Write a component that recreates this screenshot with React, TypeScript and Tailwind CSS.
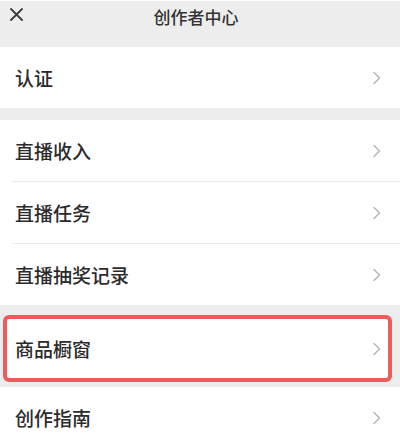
import React from "react";

const Chevron = () => (
  <svg width="10" height="14" viewBox="0 0 10 14" fill="none" className="shrink-0">
    <path d="M2 1.5 L7.5 7 L2 12.5" stroke="#b9b9b9" strokeWidth="1.6" strokeLinecap="round" strokeLinejoin="round" />
  </svg>
);

const Row = ({ label, divider }: { label: string; divider?: boolean }) => (
  <div className="bg-white">
    <div className="h-[61px] flex items-center justify-between pl-[15px] pr-[18px]">
      <span className="text-[19px] font-medium text-[#2b2b2b] leading-none">{label}</span>
      <Chevron />
    </div>
    {divider && <div className="ml-[12px] h-px bg-[#ebebeb]" />}
  </div>
);

export default function App() {
  return (
    <div
      className="w-[400px] h-[444px] overflow-hidden bg-[#ededed]"
      style={{ fontFamily: '"Noto Sans CJK SC", "Noto Sans", sans-serif' }}
    >
      <div className="h-px bg-white" />
      <div className="h-[46px] relative">
        <div className="h-[31px] flex items-center justify-center pr-[8px]">
          <span className="text-[17px] font-medium text-[#333] leading-none">创作者中心</span>
        </div>
        <svg className="absolute left-[9px] top-[6px]" width="15" height="15" viewBox="0 0 15 15">
          <path d="M2 2 L13 13 M13 2 L2 13" stroke="#3a3a3a" strokeWidth="1.8" strokeLinecap="round" />
        </svg>
      </div>
      <Row label="认证" />
      <div className="h-[12px]" />
      <Row label="直播收入" divider />
      <Row label="直播任务" divider />
      <Row label="直播抽奖记录" />
      <div className="h-[10px]" />
      <div className="ml-[3px] mr-[8px] border-[4px] border-[#ee5b5b] rounded-[6px] bg-white">
        <div className="h-[59px] flex items-center justify-between pl-[8px] pr-[6px]">
          <span className="text-[19px] font-medium text-[#2b2b2b] leading-none">商品橱窗</span>
          <Chevron />
        </div>
      </div>
      <div className="h-[5px]" />
      <Row label="创作指南" />
    </div>
  );
}
